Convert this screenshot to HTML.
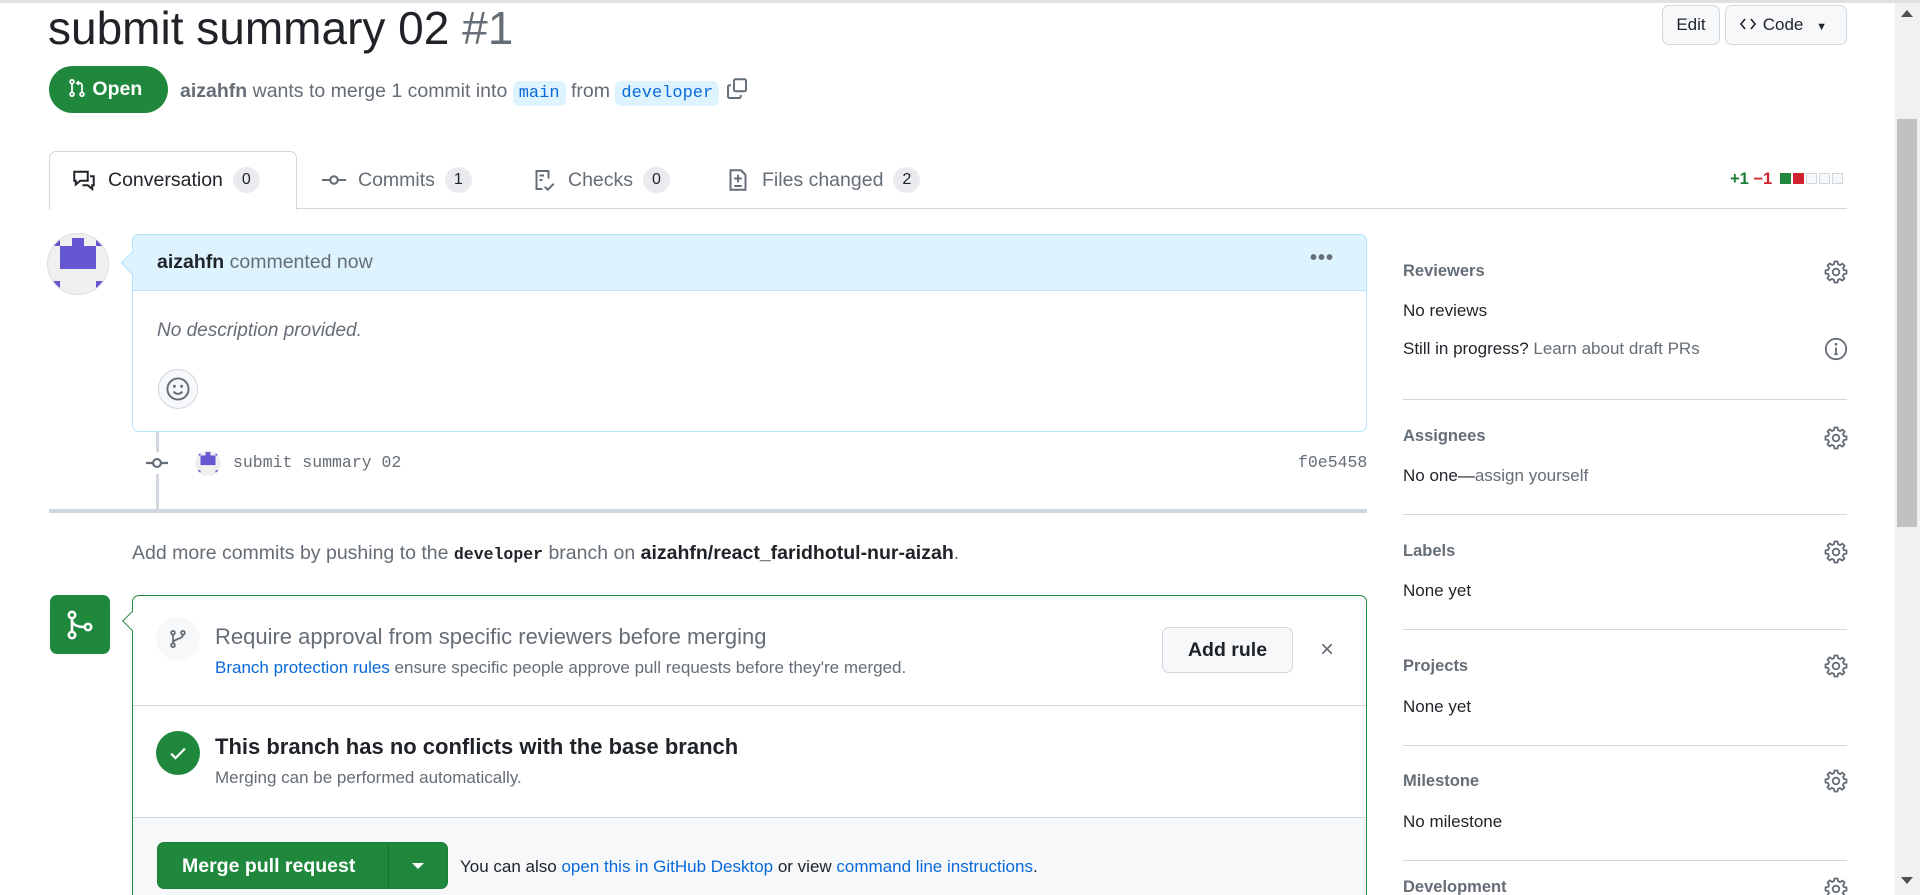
<!DOCTYPE html>
<html><head><meta charset="utf-8"><style>
*{box-sizing:border-box;margin:0;padding:0}
html,body{width:1920px;height:895px;overflow:hidden}
body{background:#fff;font-family:"Liberation Sans",sans-serif;color:#1f2328;position:relative}
#w{position:absolute;left:0;top:0;width:1920px;height:895px;overflow:hidden}
.a{position:absolute;white-space:nowrap}
.mut{color:#656d76}
.lnk{color:#0969da}
.mono{font-family:"Liberation Mono",monospace}
.cnt{display:inline-block;background:#e9ebef;border-radius:14px;padding:0 9px;font-size:16px;line-height:26px;margin-left:10px;color:#1f2328}
.tab{position:absolute;top:151px;height:58px;display:flex;align-items:center;font-size:19.5px;color:#1f2328}
.sh{font-size:16.5px;font-weight:bold;color:#656d76}
.st{font-size:17px}
.sep{position:absolute;left:1403px;width:444px;height:1px;background:#d0d7de}
.gear{position:absolute;left:1824px}
</style></head><body><div id="w">
<div class="a" style="left:0;top:0;width:1920px;height:3px;background:#e0e0e0"></div>
<div class="a" style="left:1895px;top:3px;width:25px;height:892px;background:#f1f1f1"></div>
<div class="a" style="left:1897px;top:119px;width:20px;height:408px;background:#c1c1c1"></div>
<div class="a" style="left:1901px;top:10px;width:0;height:0;border-left:6px solid transparent;border-right:6px solid transparent;border-bottom:7px solid #505050"></div>
<div class="a" style="left:1901px;top:877px;width:0;height:0;border-left:6px solid transparent;border-right:6px solid transparent;border-top:7px solid #505050"></div>

<div class="a" style="left:48px;top:0px;font-size:46px;line-height:56px">submit summary 02 <span class="mut" style="font-weight:300">#1</span></div>

<div class="a" style="left:1662px;top:5px;width:58px;height:40px;border:1px solid #d0d7de;border-radius:7px;background:#f6f8fa;font-size:17px;line-height:38px;text-align:center">Edit</div>
<div class="a" style="left:1725px;top:5px;width:122px;height:40px;border:1px solid #d0d7de;border-radius:7px;background:#f6f8fa;font-size:17px;line-height:38px;padding-left:12px"><svg width="20" height="16" viewBox="0 0 16 16" style="vertical-align:-2px"><path d="M5 3L1 8l4 5M11 3l4 5-4 5" stroke="#1f2328" stroke-width="1.6" fill="none"/></svg> Code <span style="font-size:11px;margin-left:8px">▼</span></div>

<div class="a" style="left:49px;top:66px;width:119px;height:47px;background:#1f883d;border-radius:24px;color:#fff;font-size:19.5px;font-weight:bold;line-height:47px;padding-left:18px"><svg width="20" height="20" viewBox="0 0 16 16" style="vertical-align:-3px"><g stroke="#fff" stroke-width="1.4" fill="none"><circle cx="4" cy="3" r="1.5"/><circle cx="4" cy="13" r="1.5"/><circle cx="12" cy="13" r="1.5"/><path d="M4 4.5v7M12 11.5V6a2 2 0 0 0-2-2H8M9.5 2.5L8 4l1.5 1.5"/></g></svg> Open</div>
<div class="a mut" style="left:180px;top:77px;font-size:19.5px"><b style="color:#656d76">aizahfn</b> wants to merge 1 commit into <span class="mono lnk" style="background:#ddf4ff;border-radius:6px;padding:3px 6px;font-size:17px">main</span> from <span class="mono lnk" style="background:#ddf4ff;border-radius:6px;padding:3px 6px;font-size:17px">developer</span> <svg width="24" height="24" viewBox="0 0 16 16" style="vertical-align:-4px"><g stroke="#656d76" stroke-width="1.3" fill="none"><rect x="6" y="1.5" width="8" height="8" rx="1"/><path d="M4 5.5H3a1 1 0 0 0-1 1V13a1 1 0 0 0 1 1h6.5a1 1 0 0 0 1-1v-1"/></g></svg></div>

<div class="a" style="left:49px;top:208px;width:1798px;height:1px;background:#d0d7de"></div>
<div class="a" style="left:49px;top:151px;width:248px;height:59px;border:1px solid #d0d7de;border-bottom:none;border-radius:7px 7px 0 0;background:#fff"></div>
<div class="tab" style="left:72px"><svg width="24" height="24" viewBox="0 0 16 16" style="margin-right:12px"><path d="M1.5 2.5h9v6h-5l-3 2.5v-2.5h-1zM12 5.5h2.5v6h-1V14l-3-2.5H7" stroke="#1f2328" stroke-width="1.3" fill="none"/></svg>Conversation<span class="cnt">0</span></div>
<div class="tab" style="left:322px;color:#656d76"><svg width="24" height="24" viewBox="0 0 16 16" style="margin-right:12px"><g stroke="#656d76" stroke-width="1.4" fill="none"><circle cx="8" cy="8" r="2.5"/><path d="M0 8h5.5M10.5 8H16"/></g></svg>Commits<span class="cnt">1</span></div>
<div class="tab" style="left:532px;color:#656d76"><svg width="24" height="24" viewBox="0 0 16 16" style="margin-right:12px"><path d="M11 7V2H3v12h4M5 5h3M5 8h2M8.5 12.5l2 2 4-4" stroke="#656d76" stroke-width="1.3" fill="none"/></svg>Checks<span class="cnt">0</span></div>
<div class="tab" style="left:726px;color:#656d76"><svg width="24" height="24" viewBox="0 0 16 16" style="margin-right:12px"><path d="M3 1.5h7l3 3V14.5H3zM8 4.5v5M5.5 7h5M5.5 12h5" stroke="#656d76" stroke-width="1.3" fill="none"/></svg>Files changed<span class="cnt">2</span></div>
<div class="a" style="left:1730px;top:170px;font-size:16.5px;font-weight:bold"><span style="color:#1a7f37">+1</span> <span style="color:#d1242f">−1</span> <span style="display:inline-block;width:11px;height:11px;background:#1f883d;margin-left:3px"></span><span style="display:inline-block;width:11px;height:11px;background:#cf222e;margin-left:2px"></span><span style="display:inline-block;width:11px;height:11px;border:1px solid #d0d7de;background:#f6f8fa;margin-left:2px"></span><span style="display:inline-block;width:11px;height:11px;border:1px solid #d0d7de;background:#f6f8fa;margin-left:2px"></span><span style="display:inline-block;width:11px;height:11px;border:1px solid #d0d7de;background:#f6f8fa;margin-left:2px"></span></div>

<svg class="a" style="left:47px;top:233px" width="62" height="62" viewBox="0 0 62 62"><defs><clipPath id="c"><circle cx="31" cy="31" r="30"/></clipPath></defs><circle cx="31" cy="31" r="30.5" fill="#f0f0f0" stroke="#ddd"/><g clip-path="url(#c)" fill="#6557d2"><rect x="1" y="1" width="12" height="12"/><rect x="25" y="5" width="12" height="10"/><rect x="49" y="1" width="12" height="12"/><rect x="13" y="13" width="36" height="23"/><rect x="1" y="48" width="12" height="13"/><rect x="49" y="48" width="12" height="13"/></g></svg>

<div class="a" style="left:132px;top:234px;width:1235px;height:198px;border:1px solid #b6e3ff;border-radius:7px;background:#fff"></div>
<div class="a" style="left:132px;top:234px;width:1235px;height:57px;border:1px solid #b6e3ff;border-radius:7px 7px 0 0;background:#ddf4ff"></div>
<div class="a" style="left:124px;top:255px;width:16px;height:16px;background:#ddf4ff;border-left:1px solid #b6e3ff;border-bottom:1px solid #b6e3ff;transform:rotate(45deg)"></div>
<div class="a mut" style="left:157px;top:251px;font-size:19.5px"><b style="color:#1f2328">aizahfn</b> commented now</div>
<div class="a mut" style="left:1310px;top:247px;font-size:20px;letter-spacing:1px;font-weight:bold">•••</div>
<div class="a mut" style="left:157px;top:320px;font-size:19px;font-style:italic">No description provided.</div>
<div class="a" style="left:158px;top:369px;width:40px;height:40px;border:1px solid #d0d7de;border-radius:50%;background:#f6f8fa"><svg width="26" height="26" viewBox="0 0 16 16" style="margin:6px"><g stroke="#656d76" stroke-width="1.2" fill="none"><circle cx="8" cy="8" r="6.5"/><path d="M5.3 9.5a3.2 3.2 0 0 0 5.4 0"/></g><circle cx="5.8" cy="6.3" r=".9" fill="#656d76"/><circle cx="10.2" cy="6.3" r=".9" fill="#656d76"/></svg></div>

<div class="a" style="left:156px;top:432px;width:3px;height:78px;background:#d0d7de"></div>
<svg class="a" style="left:144px;top:452px;background:#fff" width="26" height="22" viewBox="0 0 16 14"><g stroke="#656d76" stroke-width="1.4" fill="none"><circle cx="8" cy="7" r="2.5"/><path d="M1 7h4.5M10.5 7H15"/></g></svg>
<svg class="a" style="left:195px;top:450px" width="26" height="26" viewBox="0 0 62 62"><defs><clipPath id="c2"><circle cx="31" cy="31" r="30"/></clipPath></defs><circle cx="31" cy="31" r="30.5" fill="#f0f0f0"/><g clip-path="url(#c2)" fill="#6557d2"><rect x="1" y="1" width="12" height="12"/><rect x="25" y="5" width="12" height="10"/><rect x="49" y="1" width="12" height="12"/><rect x="13" y="13" width="36" height="23"/><rect x="1" y="48" width="12" height="13"/><rect x="49" y="48" width="12" height="13"/></g></svg>
<div class="a mono mut" style="left:233px;top:453px;font-size:16.5px">submit summary 02</div>
<div class="a mono mut" style="left:1298px;top:453px;font-size:16.5px">f0e5458</div>
<div class="a" style="left:49px;top:509px;width:1318px;height:4px;background:#d0d7de"></div>

<div class="a mut" style="left:132px;top:542px;font-size:19.5px">Add more commits by pushing to the <b class="mono" style="color:#1f2328;font-size:16.5px">developer</b> branch on <b style="color:#1f2328">aizahfn/react_faridhotul-nur-aizah</b>.</div>

<div class="a" style="left:50px;top:595px;width:60px;height:59px;background:#1f883d;border-radius:7px"><svg width="32" height="32" viewBox="0 0 16 16" style="margin:14px"><g stroke="#fff" stroke-width="1.3" fill="none"><circle cx="4" cy="3" r="1.6"/><circle cx="4" cy="13" r="1.6"/><circle cx="12" cy="9" r="1.6"/><path d="M4 4.6v6.8M4 5.5c0 2.5 3 3.5 6.4 3.5"/></g></svg></div>

<div class="a" style="left:132px;top:595px;width:1235px;height:310px;border:1px solid #1f883d;border-radius:7px;background:#fff;overflow:hidden">
 <div style="position:absolute;left:0;top:109px;width:100%;height:1px;background:#d0d7de"></div>
 <div style="position:absolute;left:0;top:221px;width:100%;height:100px;background:#f6f8fa;border-top:1px solid #d0d7de"></div>
</div>
<div class="a" style="left:125px;top:614px;width:14px;height:14px;background:#fff;border-left:1px solid #1f883d;border-bottom:1px solid #1f883d;transform:rotate(45deg)"></div>
<div class="a" style="left:156px;top:617px;width:44px;height:44px;border-radius:50%;background:#f6f8fa"><svg width="20" height="20" viewBox="0 0 16 16" style="margin:12px"><g stroke="#656d76" stroke-width="1.4" fill="none"><circle cx="4" cy="13" r="1.5"/><circle cx="12" cy="3" r="1.5"/><circle cx="4" cy="3" r="1.5"/><path d="M4 4.5v7M12 4.5c0 4-8 3-8 7"/></g></svg></div>
<div class="a mut" style="left:215px;top:624px;font-size:22px">Require approval from specific reviewers before merging</div>
<div class="a mut" style="left:215px;top:658px;font-size:17px"><span class="lnk">Branch protection rules</span> ensure specific people approve pull requests before they're merged.</div>
<div class="a" style="left:1162px;top:627px;width:131px;height:46px;border:1px solid #d0d7de;border-radius:7px;background:#f6f8fa;font-size:19.5px;line-height:44px;text-align:center;font-weight:bold">Add rule</div>
<div class="a mut" style="left:1320px;top:636px;font-size:24px">×</div>

<div class="a" style="left:156px;top:731px;width:44px;height:44px;border-radius:50%;background:#1f883d"><svg width="22" height="22" viewBox="0 0 16 16" style="margin:11px"><path d="M3 8.5l3.2 3.2L13 4.8" stroke="#fff" stroke-width="1.6" fill="none"/></svg></div>
<div class="a" style="left:215px;top:734px;font-size:22px;font-weight:bold">This branch has no conflicts with the base branch</div>
<div class="a mut" style="left:215px;top:768px;font-size:17px">Merging can be performed automatically.</div>

<div class="a" style="left:157px;top:842px;width:291px;height:47px;background:#1f883d;border-radius:7px;border:1px solid #1a7f37"></div>
<div class="a" style="left:388px;top:843px;width:1px;height:45px;background:#176f2c"></div>
<div class="a" style="left:182px;top:855px;font-size:19.5px;font-weight:bold;color:#fff">Merge pull request</div>
<div class="a" style="left:412px;top:863px;width:0;height:0;border-left:6px solid transparent;border-right:6px solid transparent;border-top:6px solid #fff"></div>
<div class="a" style="left:460px;top:857px;font-size:17px">You can also <span class="lnk">open this in GitHub Desktop</span> or view <span class="lnk">command line instructions</span>.</div>

<div class="a sh" style="left:1403px;top:262px">Reviewers</div>
<div class="a st" style="left:1403px;top:301px">No reviews</div>
<div class="a st" style="left:1403px;top:339px">Still in progress? <span class="mut">Learn about draft PRs</span></div>
<svg class="gear" style="top:260px" width="24" height="24" viewBox="0 0 16 16"><g stroke="#656d76" stroke-width="1.2" fill="none"><circle cx="8" cy="8" r="2.2"/><path d="M7 1h2l.4 1.8 1.3.6 1.6-1 1.4 1.4-1 1.6.6 1.3L15 7v2l-1.8.4-.6 1.3 1 1.6-1.4 1.4-1.6-1-1.3.6L9 15H7l-.4-1.8-1.3-.6-1.6 1-1.4-1.4 1-1.6-.6-1.3L1 9V7l1.8-.4.6-1.3-1-1.6 1.4-1.4 1.6 1 1.3-.6z"/></g></svg>
<svg class="gear" style="top:337px" width="24" height="24" viewBox="0 0 16 16"><g stroke="#656d76" stroke-width="1.2" fill="none"><circle cx="8" cy="8" r="6.8"/><path d="M8 7v4.5M6.8 11.5h2.4"/></g><circle cx="8" cy="4.8" r=".9" fill="#656d76"/></svg>
<div class="sep" style="top:399px"></div>
<div class="a sh" style="left:1403px;top:427px">Assignees</div>
<div class="a st" style="left:1403px;top:466px">No one—<span class="mut">assign yourself</span></div>
<div class="sep" style="top:514px"></div>
<div class="a sh" style="left:1403px;top:542px">Labels</div>
<div class="a st" style="left:1403px;top:581px">None yet</div>
<div class="sep" style="top:629px"></div>
<div class="a sh" style="left:1403px;top:657px">Projects</div>
<div class="a st" style="left:1403px;top:697px">None yet</div>
<div class="sep" style="top:745px"></div>
<div class="a sh" style="left:1403px;top:772px">Milestone</div>
<div class="a st" style="left:1403px;top:812px">No milestone</div>
<div class="sep" style="top:860px"></div>
<div class="a sh" style="left:1403px;top:878px;height:17px;overflow:hidden">Development</div>
<svg class="gear" style="top:426px" width="24" height="24" viewBox="0 0 16 16"><g stroke="#656d76" stroke-width="1.2" fill="none"><circle cx="8" cy="8" r="2.2"/><path d="M7 1h2l.4 1.8 1.3.6 1.6-1 1.4 1.4-1 1.6.6 1.3L15 7v2l-1.8.4-.6 1.3 1 1.6-1.4 1.4-1.6-1-1.3.6L9 15H7l-.4-1.8-1.3-.6-1.6 1-1.4-1.4 1-1.6-.6-1.3L1 9V7l1.8-.4.6-1.3-1-1.6 1.4-1.4 1.6 1 1.3-.6z"/></g></svg>
<svg class="gear" style="top:540px" width="24" height="24" viewBox="0 0 16 16"><g stroke="#656d76" stroke-width="1.2" fill="none"><circle cx="8" cy="8" r="2.2"/><path d="M7 1h2l.4 1.8 1.3.6 1.6-1 1.4 1.4-1 1.6.6 1.3L15 7v2l-1.8.4-.6 1.3 1 1.6-1.4 1.4-1.6-1-1.3.6L9 15H7l-.4-1.8-1.3-.6-1.6 1-1.4-1.4 1-1.6-.6-1.3L1 9V7l1.8-.4.6-1.3-1-1.6 1.4-1.4 1.6 1 1.3-.6z"/></g></svg>
<svg class="gear" style="top:654px" width="24" height="24" viewBox="0 0 16 16"><g stroke="#656d76" stroke-width="1.2" fill="none"><circle cx="8" cy="8" r="2.2"/><path d="M7 1h2l.4 1.8 1.3.6 1.6-1 1.4 1.4-1 1.6.6 1.3L15 7v2l-1.8.4-.6 1.3 1 1.6-1.4 1.4-1.6-1-1.3.6L9 15H7l-.4-1.8-1.3-.6-1.6 1-1.4-1.4 1-1.6-.6-1.3L1 9V7l1.8-.4.6-1.3-1-1.6 1.4-1.4 1.6 1 1.3-.6z"/></g></svg>
<svg class="gear" style="top:769px" width="24" height="24" viewBox="0 0 16 16"><g stroke="#656d76" stroke-width="1.2" fill="none"><circle cx="8" cy="8" r="2.2"/><path d="M7 1h2l.4 1.8 1.3.6 1.6-1 1.4 1.4-1 1.6.6 1.3L15 7v2l-1.8.4-.6 1.3 1 1.6-1.4 1.4-1.6-1-1.3.6L9 15H7l-.4-1.8-1.3-.6-1.6 1-1.4-1.4 1-1.6-.6-1.3L1 9V7l1.8-.4.6-1.3-1-1.6 1.4-1.4 1.6 1 1.3-.6z"/></g></svg>
<svg class="gear" style="top:877px" width="24" height="18" viewBox="0 0 16 12"><g stroke="#656d76" stroke-width="1.2" fill="none"><circle cx="8" cy="8" r="2.2"/><path d="M7 1h2l.4 1.8 1.3.6 1.6-1 1.4 1.4-1 1.6.6 1.3L15 7v2l-1.8.4-.6 1.3 1 1.6-1.4 1.4-1.6-1-1.3.6L9 15H7l-.4-1.8-1.3-.6-1.6 1-1.4-1.4 1-1.6-.6-1.3L1 9V7l1.8-.4.6-1.3-1-1.6 1.4-1.4 1.6 1 1.3-.6z"/></g></svg>
</div></body></html>
